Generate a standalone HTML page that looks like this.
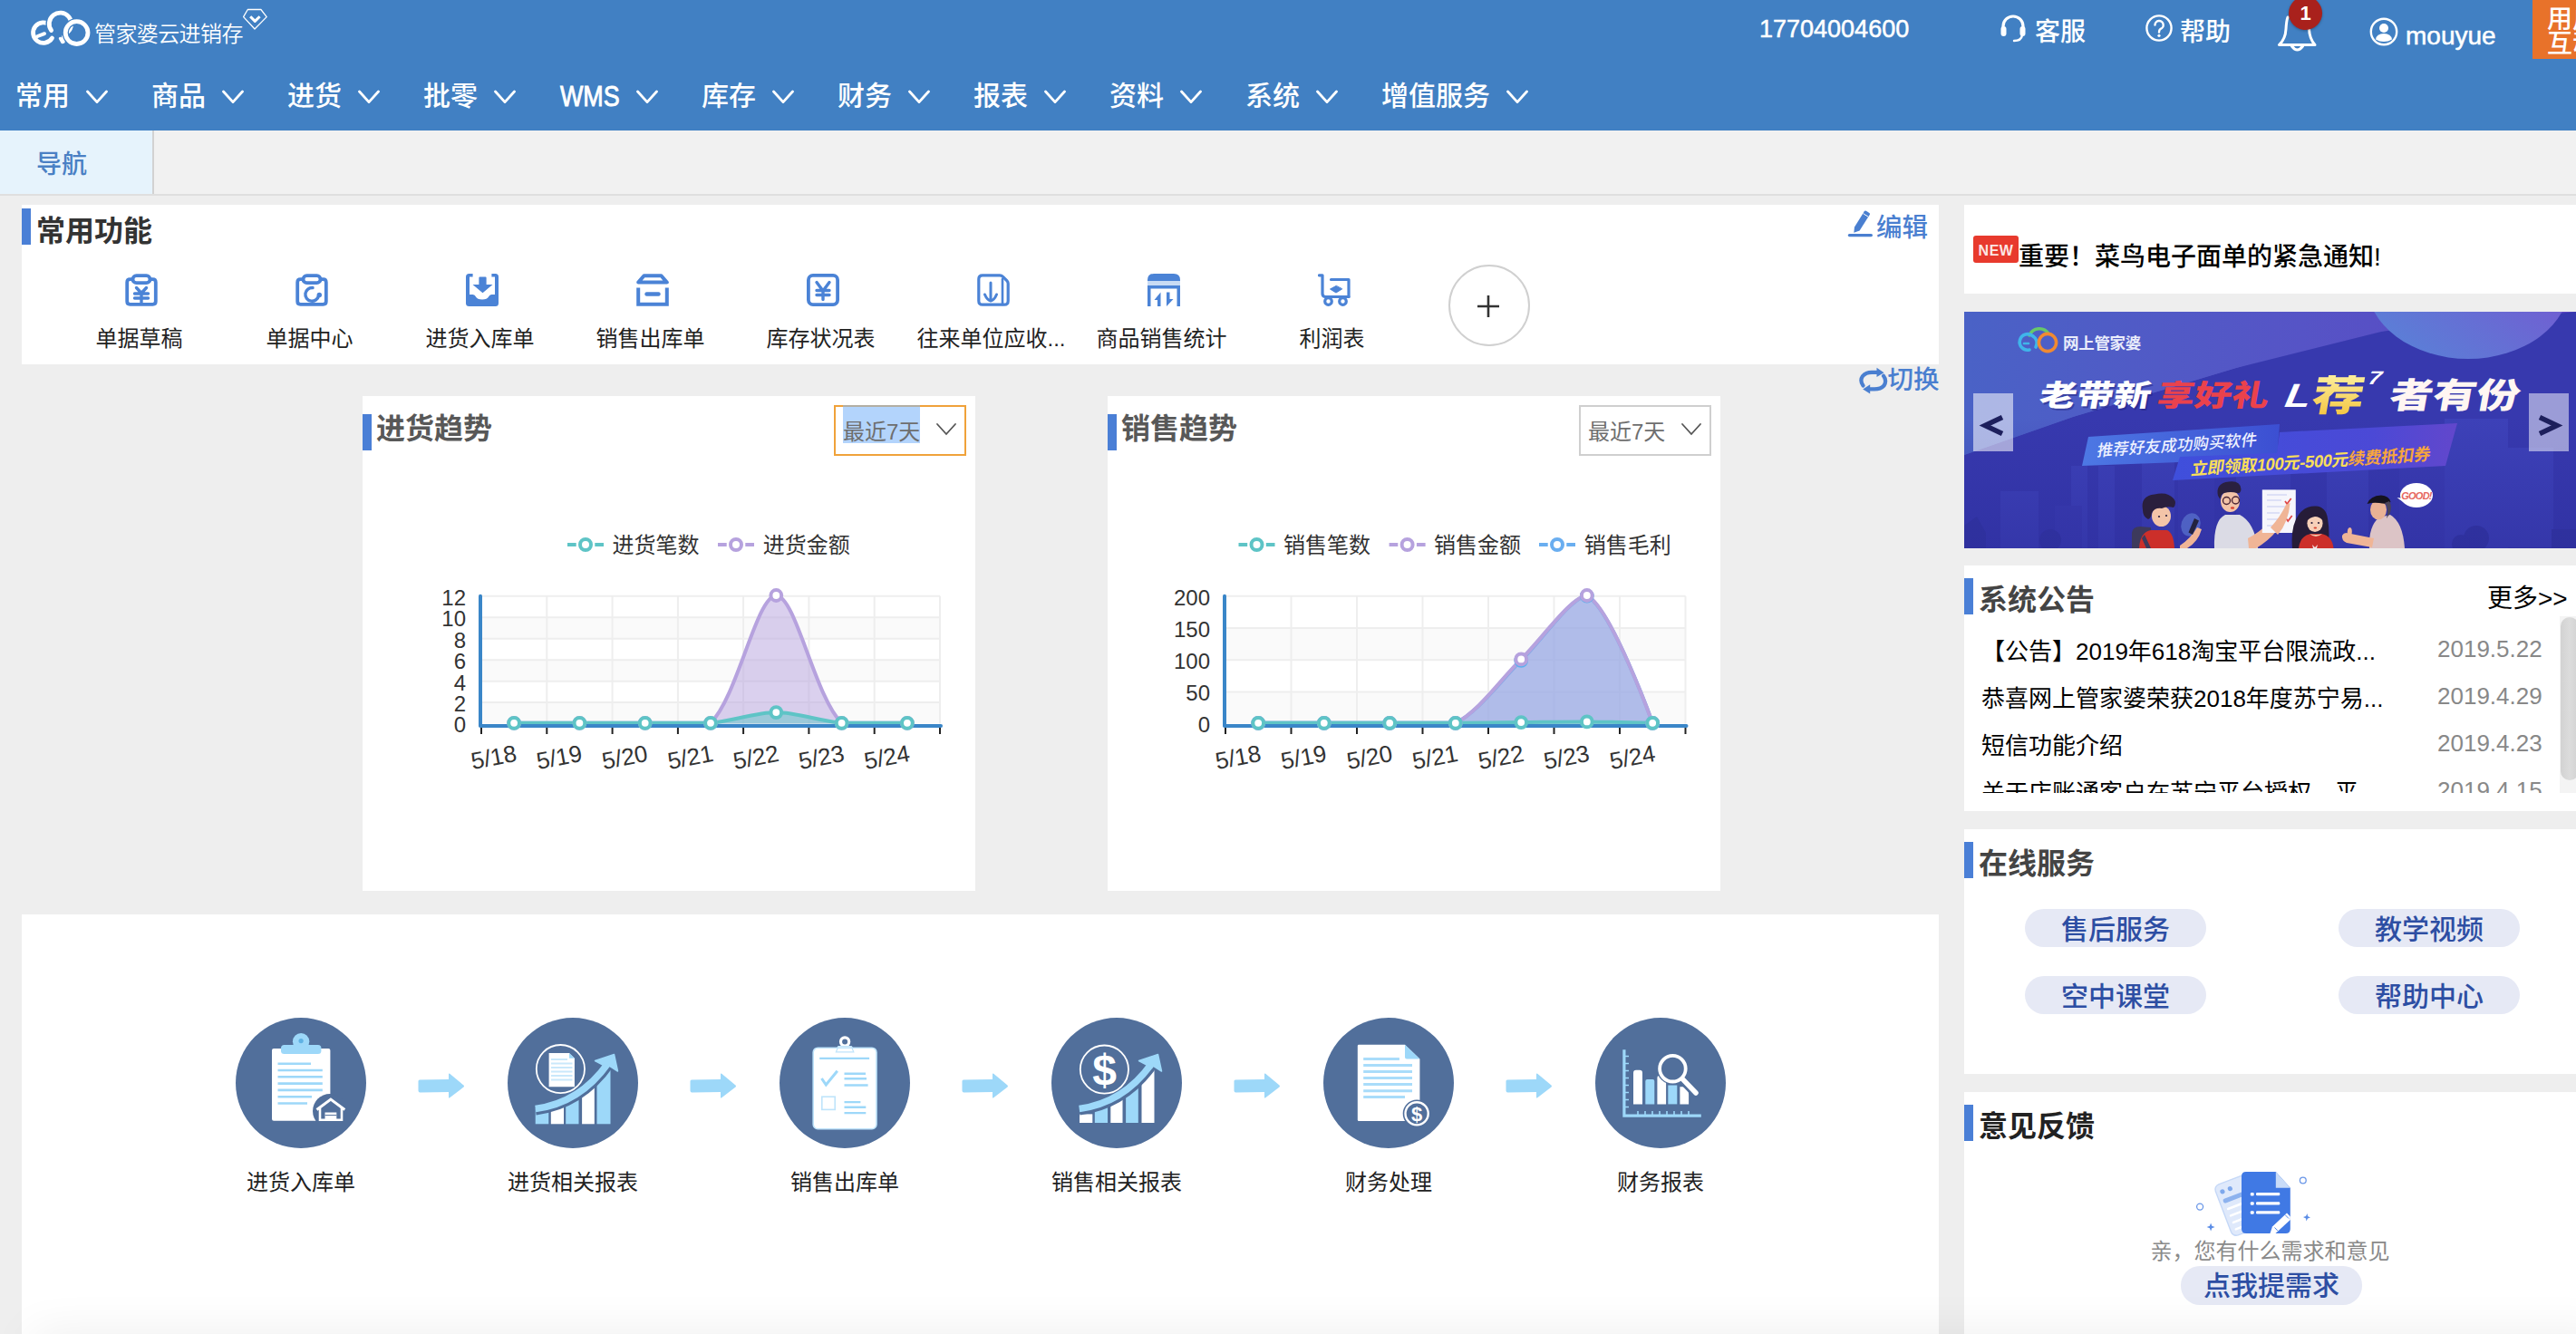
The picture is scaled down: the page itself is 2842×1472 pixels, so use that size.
<!DOCTYPE html>
<html lang="zh-CN">
<head>
<meta charset="utf-8">
<title>管家婆云进销存</title>
<style>
*{box-sizing:border-box;margin:0;padding:0}
html,body{width:2842px;height:1472px;overflow:hidden;background:#eeeeee}
body{font-family:"Liberation Sans","Noto Sans CJK SC",sans-serif;color:#333;position:relative}
.abs{position:absolute}
#hdr{position:absolute;left:0;top:0;width:2842px;height:144px;background:#4180c3}
#logoTxt{position:absolute;left:104px;top:20px;font-size:24px;line-height:36px;color:#fff;font-weight:350;letter-spacing:-0.6px;white-space:nowrap}
.nav{position:absolute;top:84px;height:44px;line-height:44px;font-size:30px;color:#fff;white-space:nowrap;font-weight:500}
.nav svg{position:absolute;top:14.5px;width:24px;height:16px}
.hr{position:absolute;color:#fff;white-space:nowrap;font-size:28px;line-height:40px}
#tabbar{position:absolute;left:0;top:144px;width:2842px;height:72px;background:#f1f1f1;border-bottom:2px solid #dfdfdf}
#tab1{position:absolute;left:0;top:0;width:170px;height:70px;background:#e6f3fc;border-right:2px solid #d2d2d2;color:#4a80c4;font-size:28px;line-height:76px;padding-left:40px;font-weight:500}
.panel{position:absolute;background:#fff}
.bar{position:absolute;width:10px;height:40px;background:#4a7fd6}
.ttl{position:absolute;font-size:32px;font-weight:bold;line-height:40px;color:#333;white-space:nowrap;margin-top:1px}
.fi{position:absolute;width:188px;text-align:center;font-size:24px;line-height:32px;color:#222;white-space:nowrap;top:358px;margin-left:-2.5px}
.fic{position:absolute;top:300px;width:40px;height:40px}
.lnk{position:absolute;font-size:28.5px;line-height:36px;color:#4a7fd0;white-space:nowrap;font-weight:500}
.flow{position:absolute;top:1289px;width:300px;text-align:center;font-size:24px;line-height:32px;color:#222;white-space:nowrap}
.circ{position:absolute;top:1123px;width:144px;height:144px;border-radius:50%;background:#516f9b}
.pill{position:absolute;width:200px;height:42px;border-radius:21px;background:#e6e9f5;color:#2d4ea3;font-size:30px;line-height:45px;text-align:center;white-space:nowrap;font-weight:500;overflow:hidden}
.nt{position:absolute;left:2187px;font-size:26px;line-height:36px;color:#000;white-space:nowrap}
.nd{position:absolute;left:2689px;font-size:26px;line-height:36px;color:#888;white-space:nowrap}
</style>
</head>
<body>
<!-- HEADER -->
<div id="hdr">
  <svg class="abs" style="left:30px;top:8px" width="72" height="48" viewBox="0 0 72 48" fill="none" stroke-linecap="round">
    <path d="M25.5 19.8 A11.3 11.3 0 1 0 27.5 34" stroke="#fff" stroke-width="4.8"/>
    <path d="M11.5 32 L19 29.2" stroke="#fff" stroke-width="4"/>
    <path d="M27.2 26.5 A12.2 12.2 0 1 1 45 27 " stroke="#4180c3" stroke-width="7.4"/>
    <path d="M26.6 25.5 A12.2 12.2 0 1 1 44.5 27.5 Q40 31 39.5 37.5" stroke="#fff" stroke-width="4.8"/>
    <circle cx="54.6" cy="28.1" r="12.4" stroke="#4180c3" stroke-width="7.4"/>
    <circle cx="54.6" cy="28.1" r="12.4" stroke="#fff" stroke-width="4.8"/>
    <path d="M36.5 34.5 L38.8 38.5" stroke="#fff" stroke-width="3.4"/>
  </svg>
  <div id="logoTxt">管家婆云进销存</div>
  <svg class="abs" style="left:268px;top:9px" width="28" height="26" viewBox="0 0 28 26" fill="none" stroke="#fff" stroke-width="1.3" stroke-linejoin="round">
    <path d="M5.3 1.5 L19.9 1.5 L26.2 9.6 L13 23 L0.6 9.6 Z"/>
    <path d="M8.2 9.2 L13.3 14.4 L18.6 9.2" stroke-width="3"/>
  </svg>
  <div class="nav" style="left:17px">常用<svg style="left:78px" viewBox="0 0 24 16" fill="none" stroke="#fff" stroke-width="2.8" stroke-linecap="round" stroke-linejoin="round"><path d="M1.5 2 L12 13.6 L22.5 2"/></svg></div>
<div class="nav" style="left:167px">商品<svg style="left:78px" viewBox="0 0 24 16" fill="none" stroke="#fff" stroke-width="2.8" stroke-linecap="round" stroke-linejoin="round"><path d="M1.5 2 L12 13.6 L22.5 2"/></svg></div>
<div class="nav" style="left:317px">进货<svg style="left:78px" viewBox="0 0 24 16" fill="none" stroke="#fff" stroke-width="2.8" stroke-linecap="round" stroke-linejoin="round"><path d="M1.5 2 L12 13.6 L22.5 2"/></svg></div>
<div class="nav" style="left:467px">批零<svg style="left:78px" viewBox="0 0 24 16" fill="none" stroke="#fff" stroke-width="2.8" stroke-linecap="round" stroke-linejoin="round"><path d="M1.5 2 L12 13.6 L22.5 2"/></svg></div>
<div class="nav" style="left:618px"><span style="display:inline-block;font-size:32px;transform:scaleX(0.84);transform-origin:0 50%;-webkit-text-stroke:0.9px #fff">WMS</span><svg style="left:84px" viewBox="0 0 24 16" fill="none" stroke="#fff" stroke-width="2.8" stroke-linecap="round" stroke-linejoin="round"><path d="M1.5 2 L12 13.6 L22.5 2"/></svg></div>
<div class="nav" style="left:774px">库存<svg style="left:78px" viewBox="0 0 24 16" fill="none" stroke="#fff" stroke-width="2.8" stroke-linecap="round" stroke-linejoin="round"><path d="M1.5 2 L12 13.6 L22.5 2"/></svg></div>
<div class="nav" style="left:924px">财务<svg style="left:78px" viewBox="0 0 24 16" fill="none" stroke="#fff" stroke-width="2.8" stroke-linecap="round" stroke-linejoin="round"><path d="M1.5 2 L12 13.6 L22.5 2"/></svg></div>
<div class="nav" style="left:1074px">报表<svg style="left:78px" viewBox="0 0 24 16" fill="none" stroke="#fff" stroke-width="2.8" stroke-linecap="round" stroke-linejoin="round"><path d="M1.5 2 L12 13.6 L22.5 2"/></svg></div>
<div class="nav" style="left:1224px">资料<svg style="left:78px" viewBox="0 0 24 16" fill="none" stroke="#fff" stroke-width="2.8" stroke-linecap="round" stroke-linejoin="round"><path d="M1.5 2 L12 13.6 L22.5 2"/></svg></div>
<div class="nav" style="left:1374px">系统<svg style="left:78px" viewBox="0 0 24 16" fill="none" stroke="#fff" stroke-width="2.8" stroke-linecap="round" stroke-linejoin="round"><path d="M1.5 2 L12 13.6 L22.5 2"/></svg></div>
<div class="nav" style="left:1524px">增值服务<svg style="left:138px" viewBox="0 0 24 16" fill="none" stroke="#fff" stroke-width="2.8" stroke-linecap="round" stroke-linejoin="round"><path d="M1.5 2 L12 13.6 L22.5 2"/></svg></div>

<div id="hdrR">
  <div class="hr" style="left:1941px;top:12px;font-size:27px;-webkit-text-stroke:0.5px #fff">17704004600</div>
  <!-- headset -->
  <svg class="abs" style="left:2204px;top:14px" width="34" height="34" viewBox="0 0 34 34" fill="none" stroke="#fff" stroke-linecap="round">
    <path d="M6 19 V15 A11 11 0 0 1 28 15 V19" stroke-width="3.2"/>
    <rect x="3.5" y="15" width="6" height="11" rx="3" fill="#fff" stroke="none"/>
    <rect x="24.5" y="15" width="6" height="11" rx="3" fill="#fff" stroke="none"/>
    <path d="M27 25 Q26 31 18 31" stroke-width="2.4"/>
  </svg>
  <div class="hr" style="left:2245px;top:16px;font-weight:500">客服</div>
  <!-- help -->
  <svg class="abs" style="left:2366px;top:15px" width="32" height="32" viewBox="0 0 32 32" fill="none" stroke="#fff">
    <circle cx="16" cy="16" r="13.6" stroke-width="2.4"/>
    <path d="M11.5 12.5 A4.6 4.6 0 1 1 17.5 17 Q16 18 16 20.5" stroke-width="2.4" stroke-linecap="round"/>
    <circle cx="16" cy="24.3" r="1.6" fill="#fff" stroke="none"/>
  </svg>
  <div class="hr" style="left:2405px;top:16px;font-weight:500">帮助</div>
  <!-- bell -->
  <svg class="abs" style="left:2510px;top:14px" width="50" height="46" viewBox="0 0 50 46" fill="none" stroke="#fff" stroke-width="3" stroke-linecap="round" stroke-linejoin="round">
    <path d="M14 5 Q12.5 9 12 18 Q11.5 29 4.5 35.5 L44 35.5 Q38 29 37.5 18"/>
    <path d="M18.5 37 Q24.5 45 30.5 37"/>
  </svg>
  <div class="abs" style="left:2525px;top:-4px;width:37px;height:37px;border-radius:50%;background:#a9211c;color:#fff;font-size:22px;font-weight:bold;line-height:37px;text-align:center;box-shadow:0 1px 3px rgba(0,0,0,.3)">1</div>
  <!-- user -->
  <svg class="abs" style="left:2613px;top:18px" width="34" height="34" viewBox="0 0 34 34" fill="none" stroke="#fff">
    <circle cx="17" cy="17" r="14.2" stroke-width="2.4"/>
    <circle cx="17" cy="13" r="5" fill="#fff" stroke="none"/>
    <path d="M8 25.5 Q9 19 17 19 Q25 19 26 25.5 Q22 28 17 28 Q12 28 8 25.5Z" fill="#fff" stroke="none"/>
  </svg>
  <div class="hr" style="left:2654px;top:20px;font-weight:500;-webkit-text-stroke:0.5px #fff">mouyue</div>
  <div class="abs" style="left:2794px;top:0;width:48px;height:65px;background:#e8722a;overflow:hidden">
    <div style="position:absolute;left:16px;top:8px;width:80px;font-size:28px;line-height:27px;color:#fff;font-weight:500">用户<br>互动</div>
  </div>
</div>
</div>
<!-- TAB BAR -->
<div id="tabbar"><div id="tab1">导航</div></div>
<!-- COMMON FUNCTIONS -->
<div class="panel" style="left:24px;top:226px;width:2115px;height:176px"></div>
<div class="bar" style="left:24px;top:230px"></div>
<div class="ttl" style="left:40px;top:234px">常用功能</div>
<svg class="abs" style="left:2038px;top:230px" width="30" height="34" viewBox="0 0 30 34" fill="#4a7fd0">
  <rect x="0.8" y="28" width="27.2" height="3.2" rx="1.6"/>
  <path d="M7.3 26.8 L8 20.5 L18.8 3.2 Q19.6 2 20.9 2.8 L24.3 4.9 Q25.5 5.7 24.7 7 L13.6 24.6 Z"/>
  <path d="M17.5 5.6 L23.2 9.2" stroke="#fff" stroke-width="1"/>
</svg>
<div class="lnk" style="left:2070px;top:233px">编辑</div>
<svg class="abs" style="left:2050px;top:404px" width="34" height="32" viewBox="0 0 34 32" fill="none" stroke="#4a7fd0" stroke-width="4.2" stroke-linecap="round">
  <path d="M5.5 21.5 Q1.5 16 5 11 Q8.5 6.8 15 6.8 H21"/>
  <path d="M28 10.8 Q32 16 28.5 21.5 Q25 25.4 18 25.4 H12.5"/>
  <path d="M20.5 1.8 L28.5 7.3 L20.5 12 Z" fill="#4a7fd0" stroke="none"/>
  <path d="M13.2 20.3 L5.2 25.6 L13.2 30.6 Z" fill="#4a7fd0" stroke="none"/>
</svg>
<div class="lnk" style="left:2082.5px;top:401px">切换</div>

<!-- func icons -->
<svg class="abs" style="left:138px;top:302px" width="36" height="36" viewBox="0 0 36 36" fill="none" stroke="#4b83d6" stroke-width="3.8" stroke-linejoin="round" stroke-linecap="round">
  <path d="M8 6.2 H5.5 Q2.2 6.2 2.2 9.5 V30.5 Q2.2 33.8 5.5 33.8 H30.5 Q33.8 33.8 33.8 30.5 V9.5 Q33.8 6.2 30.5 6.2 H28"/>
  <rect x="8.5" y="2.2" width="19" height="8" rx="4"/>
  <path d="M12.5 15.5 L18 21.5 L23.5 15.5 M10.5 22 H25.5 M10.5 27 H25.5 M18 21.5 V31.5" stroke-width="3.4"/>
</svg>
<svg class="abs" style="left:326px;top:302px" width="36" height="36" viewBox="0 0 36 36" fill="none" stroke="#4b83d6" stroke-width="3.8" stroke-linejoin="round" stroke-linecap="round">
  <path d="M8 6.2 H5.5 Q2.2 6.2 2.2 9.5 V30.5 Q2.2 33.8 5.5 33.8 H30.5 Q33.8 33.8 33.8 30.5 V9.5 Q33.8 6.2 30.5 6.2 H28"/>
  <rect x="8.5" y="2.2" width="19" height="8" rx="4"/>
  <path d="M19 15.5 A7.4 7.4 0 1 0 25.5 24.5" stroke-width="3.4"/>
  <circle cx="26.3" cy="23.5" r="2.7" fill="#4b83d6" stroke="none"/>
</svg>
<svg class="abs" style="left:514px;top:302px" width="36" height="36" viewBox="0 0 36 36">
  <rect x="0" y="0" width="36" height="36" rx="3.5" fill="#4b83d6"/>
  <path d="M7.6 -1 H28.4 V3.6 H32 V23 H28.4 Q26 23 25 25.5 Q23.5 28.5 18 28.5 Q12.5 28.5 11 25.5 Q10 23 7.6 23 H4 V3.6 H7.6 Z" fill="#fff"/>
  <path d="M14.4 4.5 Q14.4 3.6 15.4 3.6 H21.6 Q22.6 3.6 22.6 4.5 V12 H29.5 L18.5 21.3 L7.5 12 H14.4 Z" fill="#4b83d6"/>
</svg>
<svg class="abs" style="left:702px;top:302px" width="36" height="36" viewBox="0 0 36 36" fill="none" stroke="#4b83d6" stroke-width="4" stroke-linejoin="miter">
  <path d="M8.5 2.2 H27.5 L33.8 9.6 H2.2 Z" stroke-linejoin="round"/>
  <path d="M2.2 15.5 V33.8 H33.8 V15.5"/>
  <path d="M11.5 22.5 H24.5" stroke-linecap="round" stroke-width="4.4"/>
</svg>
<svg class="abs" style="left:890px;top:302px" width="36" height="36" viewBox="0 0 36 36" fill="none" stroke="#4b83d6" stroke-width="3.2" stroke-linecap="round" stroke-linejoin="round">
  <rect x="1.9" y="1.9" width="32.2" height="32.2" rx="5" stroke-width="3.8"/>
  <path d="M11 9.5 L18 19 L25 9.5 M11 18.5 H25 M11 23.5 H25 M18 19 V28.5" stroke-width="3.4"/>
</svg>
<svg class="abs" style="left:1078px;top:302px" width="36" height="36" viewBox="0 0 36 36" fill="none" stroke="#4b83d6" stroke-width="3.2" stroke-linecap="round" stroke-linejoin="round">
  <path d="M6 1.8 H25 Q27 1.8 28.5 3.3 L33 7.8 Q34.2 9 34.2 11 V30 Q34.2 34.2 30 34.2 H6 Q1.8 34.2 1.8 30 V6 Q1.8 1.8 6 1.8 Z"/>
  <path d="M28 6 V34" stroke-width="2.6"/>
  <path d="M15 10 V29 M8.5 23 Q11 29 15 30 Q19 29 21.5 23" stroke-width="3"/>
</svg>
<svg class="abs" style="left:1266px;top:302px" width="36" height="36" viewBox="0 0 36 36" fill="#4b83d6">
  <path d="M0 7 Q0 0 7 0 H29 Q36 0 36 7 V8 H0 Z"/>
  <rect x="0" y="8" width="36" height="5" fill="#c9dbf4"/>
  <path d="M0 13 H36 V36 H32.5 V16.5 H3.5 V36 H0 Z"/>
  <path d="M14.5 20.5 V36 H11 V29 H7.5 Z"/>
  <path d="M21 20.5 H24.5 V28 H28.5 L21 36 Z"/>
</svg>
<svg class="abs" style="left:1454px;top:302px" width="36" height="36" viewBox="0 0 36 36" fill="none" stroke="#4b83d6" stroke-width="3.2" stroke-linecap="round" stroke-linejoin="round">
  <path d="M1.5 1.8 H5 V22 Q5 25.5 8.5 25.5 H34"/>
  <path d="M14.5 6.5 H34 V25.5"/>
  <path d="M20 13.5 L13.5 17 L20 21 L26.5 17 Z" fill="#4b83d6" stroke-width="1"/>
  <circle cx="11.5" cy="30.5" r="3.8"/>
  <circle cx="27.5" cy="30.5" r="3.8"/>
</svg>

<div class="fi" style="left:62px">单据草稿</div>
<div class="fi" style="left:250px">单据中心</div>
<div class="fi" style="left:438px">进货入库单</div>
<div class="fi" style="left:626px">销售出库单</div>
<div class="fi" style="left:814px">库存状况表</div>
<div class="fi" style="left:1002px">往来单位应收...</div>
<div class="fi" style="left:1190px">商品销售统计</div>
<div class="fi" style="left:1378px">利润表</div>
<div class="abs" style="left:1598px;top:292px;width:90px;height:90px;border-radius:50%;border:2px solid #d0d0d0;background:#fff"></div>
<svg class="abs" style="left:1628px;top:324px" width="28" height="28" viewBox="0 0 28 28" stroke="#333" stroke-width="2.6" fill="none"><path d="M14 2 V26 M2 14 H26"/></svg>
<!-- CHARTS -->
<div class="panel" style="left:400px;top:437px;width:676px;height:546px"></div>
<div class="panel" style="left:1222px;top:437px;width:676px;height:546px"></div>
<div class="bar" style="left:400px;top:457px"></div>
<div class="ttl" style="left:415px;top:452px;color:#585858">进货趋势</div>
<div class="abs" style="left:920px;top:447px;width:146px;height:56px;border:2px solid #f0a23a;background:#fff"></div>
<div class="abs" style="left:930px;top:449px;width:85px;height:40px;background:#b3d4fc"></div><div class="abs" style="left:930px;top:447px;width:85px;height:2px;background:#b3afa4"></div>
<div class="abs" style="left:930px;top:461px;font-size:24px;line-height:32px;color:#6e6e6e;white-space:nowrap">最近7天</div>
<svg class="abs" style="left:1032px;top:466px" width="24" height="16" viewBox="0 0 24 16" fill="none" stroke="#555" stroke-width="1.8" stroke-linecap="round"><path d="M2 2 L12 13 L22 2"/></svg>
<svg class="abs" style="left:400px;top:437px" width="676" height="546" viewBox="400 437 676 546" font-family="Liberation Sans, Noto Sans CJK SC, sans-serif">
<path d="M626.0 601 H635.7 M656.3 601 H666.0" stroke="#5ec4c6" stroke-width="4"/>
<circle cx="646.0" cy="601" r="6" fill="#fff" stroke="#5ec4c6" stroke-width="4"/>
<text x="675.6" y="610" font-size="24" fill="#333">进货笔数</text>
<path d="M792.0 601 H801.7 M822.3 601 H832.0" stroke="#b6a2de" stroke-width="4"/>
<circle cx="812.0" cy="601" r="6" fill="#fff" stroke="#b6a2de" stroke-width="4"/>
<text x="841.7" y="610" font-size="24" fill="#333">进货金额</text>
<rect x="531.0" y="681.3" width="506.0" height="23.5" fill="#fafafa"/>
<rect x="531.0" y="728.2" width="506.0" height="23.5" fill="#fafafa"/>
<rect x="531.0" y="775.1" width="506.0" height="23.5" fill="#fafafa"/>
<path d="M531.0 657.8 H1037.0" stroke="#eeeeee" stroke-width="2"/>
<path d="M531.0 681.3 H1037.0" stroke="#eeeeee" stroke-width="2"/>
<path d="M531.0 704.7 H1037.0" stroke="#eeeeee" stroke-width="2"/>
<path d="M531.0 728.2 H1037.0" stroke="#eeeeee" stroke-width="2"/>
<path d="M531.0 751.7 H1037.0" stroke="#eeeeee" stroke-width="2"/>
<path d="M531.0 775.1 H1037.0" stroke="#eeeeee" stroke-width="2"/>
<path d="M603.3 657.8 V798.6" stroke="#eeeeee" stroke-width="2"/>
<path d="M675.6 657.8 V798.6" stroke="#eeeeee" stroke-width="2"/>
<path d="M747.9 657.8 V798.6" stroke="#eeeeee" stroke-width="2"/>
<path d="M820.1 657.8 V798.6" stroke="#eeeeee" stroke-width="2"/>
<path d="M892.4 657.8 V798.6" stroke="#eeeeee" stroke-width="2"/>
<path d="M964.7 657.8 V798.6" stroke="#eeeeee" stroke-width="2"/>
<path d="M1037.0 657.8 V798.6" stroke="#eeeeee" stroke-width="2"/>
<text x="514.0" y="667.6" font-size="24" fill="#333" text-anchor="end">12</text>
<text x="514.0" y="691.1" font-size="24" fill="#333" text-anchor="end">10</text>
<text x="514.0" y="714.5" font-size="24" fill="#333" text-anchor="end">8</text>
<text x="514.0" y="738.0" font-size="24" fill="#333" text-anchor="end">6</text>
<text x="514.0" y="761.5" font-size="24" fill="#333" text-anchor="end">4</text>
<text x="514.0" y="784.9" font-size="24" fill="#333" text-anchor="end">2</text>
<text x="514.0" y="808.4" font-size="24" fill="#333" text-anchor="end">0</text>
<path d="M567.1 797.8 C567.1 797.8 617.7 797.8 639.4 797.8 C661.1 797.8 690.0 797.8 711.7 797.8 C733.4 797.8 770.4 797.8 784.0 797.8 C813.8 768.8 834.6 657.8 856.3 657.0 C878.0 657.8 898.8 768.8 928.6 797.8 C942.2 797.8 1000.9 797.8 1000.9 797.8 L1000.9 798.6 L567.1 798.6 Z" fill="#b6a2de" fill-opacity="0.5"/>
<path d="M567.1 797.8 C567.1 797.8 617.7 797.8 639.4 797.8 C661.1 797.8 690.0 797.8 711.7 797.8 C733.4 797.8 770.4 797.8 784.0 797.8 C813.8 768.8 834.6 657.8 856.3 657.0 C878.0 657.8 898.8 768.8 928.6 797.8 C942.2 797.8 1000.9 797.8 1000.9 797.8" fill="none" stroke="#b6a2de" stroke-width="4" stroke-linejoin="round"/>
<path d="M567.1 797.8 C567.1 797.8 617.7 797.8 639.4 797.8 C661.1 797.8 690.0 797.8 711.7 797.8 C733.4 797.8 762.5 797.8 784.0 797.8 C805.8 796.0 834.6 786.1 856.3 786.1 C878.0 786.1 906.7 796.0 928.6 797.8 C950.1 797.8 1000.9 797.8 1000.9 797.8 L1000.9 798.6 L567.1 798.6 Z" fill="#5ec4c6" fill-opacity="0.5"/>
<path d="M567.1 797.8 C567.1 797.8 617.7 797.8 639.4 797.8 C661.1 797.8 690.0 797.8 711.7 797.8 C733.4 797.8 762.5 797.8 784.0 797.8 C805.8 796.0 834.6 786.1 856.3 786.1 C878.0 786.1 906.7 796.0 928.6 797.8 C950.1 797.8 1000.9 797.8 1000.9 797.8" fill="none" stroke="#5ec4c6" stroke-width="4" stroke-linejoin="round"/>
<path d="M530.0 657.8 V800.6" stroke="#3a86c8" stroke-width="4" stroke-linecap="round"/>
<path d="M530.0 801.0 H1038.0" stroke="#3a86c8" stroke-width="4" stroke-linecap="round"/>
<path d="M531.0 803.0 V810.0" stroke="#222" stroke-width="2"/>
<path d="M603.3 803.0 V810.0" stroke="#222" stroke-width="2"/>
<path d="M675.6 803.0 V810.0" stroke="#222" stroke-width="2"/>
<path d="M747.9 803.0 V810.0" stroke="#222" stroke-width="2"/>
<path d="M820.1 803.0 V810.0" stroke="#222" stroke-width="2"/>
<path d="M892.4 803.0 V810.0" stroke="#222" stroke-width="2"/>
<path d="M964.7 803.0 V810.0" stroke="#222" stroke-width="2"/>
<path d="M1037.0 803.0 V810.0" stroke="#222" stroke-width="2"/>
<circle cx="567.1" cy="797.8" r="5.9" fill="#fff" stroke="#b6a2de" stroke-width="4"/>
<circle cx="639.4" cy="797.8" r="5.9" fill="#fff" stroke="#b6a2de" stroke-width="4"/>
<circle cx="711.7" cy="797.8" r="5.9" fill="#fff" stroke="#b6a2de" stroke-width="4"/>
<circle cx="784.0" cy="797.8" r="5.9" fill="#fff" stroke="#b6a2de" stroke-width="4"/>
<circle cx="856.3" cy="657.0" r="5.9" fill="#fff" stroke="#b6a2de" stroke-width="4"/>
<circle cx="928.6" cy="797.8" r="5.9" fill="#fff" stroke="#b6a2de" stroke-width="4"/>
<circle cx="1000.9" cy="797.8" r="5.9" fill="#fff" stroke="#b6a2de" stroke-width="4"/>
<circle cx="567.1" cy="797.8" r="5.9" fill="#fff" stroke="#5ec4c6" stroke-width="4"/>
<circle cx="639.4" cy="797.8" r="5.9" fill="#fff" stroke="#5ec4c6" stroke-width="4"/>
<circle cx="711.7" cy="797.8" r="5.9" fill="#fff" stroke="#5ec4c6" stroke-width="4"/>
<circle cx="784.0" cy="797.8" r="5.9" fill="#fff" stroke="#5ec4c6" stroke-width="4"/>
<circle cx="856.3" cy="786.1" r="5.9" fill="#fff" stroke="#5ec4c6" stroke-width="4"/>
<circle cx="928.6" cy="797.8" r="5.9" fill="#fff" stroke="#5ec4c6" stroke-width="4"/>
<circle cx="1000.9" cy="797.8" r="5.9" fill="#fff" stroke="#5ec4c6" stroke-width="4"/>
<text transform="translate(567.6,820) rotate(-10.5)" y="20" font-size="26" fill="#333" text-anchor="end">5/18</text>
<text transform="translate(639.9,820) rotate(-10.5)" y="20" font-size="26" fill="#333" text-anchor="end">5/19</text>
<text transform="translate(712.2,820) rotate(-10.5)" y="20" font-size="26" fill="#333" text-anchor="end">5/20</text>
<text transform="translate(784.5,820) rotate(-10.5)" y="20" font-size="26" fill="#333" text-anchor="end">5/21</text>
<text transform="translate(856.8,820) rotate(-10.5)" y="20" font-size="26" fill="#333" text-anchor="end">5/22</text>
<text transform="translate(929.1,820) rotate(-10.5)" y="20" font-size="26" fill="#333" text-anchor="end">5/23</text>
<text transform="translate(1001.4,820) rotate(-10.5)" y="20" font-size="26" fill="#333" text-anchor="end">5/24</text>
</svg>
<div class="bar" style="left:1222px;top:457px"></div>
<div class="ttl" style="left:1237px;top:452px;color:#585858">销售趋势</div>
<div class="abs" style="left:1742px;top:447px;width:146px;height:56px;border:2px solid #cfcfcf;background:#fff"></div>
<div class="abs" style="left:1752px;top:461px;font-size:24px;line-height:32px;color:#6e6e6e;white-space:nowrap">最近7天</div>
<svg class="abs" style="left:1854px;top:466px" width="24" height="16" viewBox="0 0 24 16" fill="none" stroke="#555" stroke-width="1.8" stroke-linecap="round"><path d="M2 2 L12 13 L22 2"/></svg>
<svg class="abs" style="left:1222px;top:437px" width="676" height="546" viewBox="1222 437 676 546" font-family="Liberation Sans, Noto Sans CJK SC, sans-serif">
<path d="M1366.5 601 H1376.2 M1396.8 601 H1406.5" stroke="#5ec4c6" stroke-width="4"/>
<circle cx="1386.5" cy="601" r="6" fill="#fff" stroke="#5ec4c6" stroke-width="4"/>
<text x="1416.0" y="610" font-size="24" fill="#333">销售笔数</text>
<path d="M1532.6 601 H1542.3 M1562.9 601 H1572.6" stroke="#b6a2de" stroke-width="4"/>
<circle cx="1552.6" cy="601" r="6" fill="#fff" stroke="#b6a2de" stroke-width="4"/>
<text x="1582.0" y="610" font-size="24" fill="#333">销售金额</text>
<path d="M1698.0 601 H1707.7 M1728.3 601 H1738.0" stroke="#6aaef0" stroke-width="4"/>
<circle cx="1718.0" cy="601" r="6" fill="#fff" stroke="#6aaef0" stroke-width="4"/>
<text x="1747.8" y="610" font-size="24" fill="#333">销售毛利</text>
<rect x="1352.0" y="693.0" width="507.5" height="35.2" fill="#fafafa"/>
<rect x="1352.0" y="763.4" width="507.5" height="35.2" fill="#fafafa"/>
<path d="M1352.0 657.8 H1859.5" stroke="#eeeeee" stroke-width="2"/>
<path d="M1352.0 693.0 H1859.5" stroke="#eeeeee" stroke-width="2"/>
<path d="M1352.0 728.2 H1859.5" stroke="#eeeeee" stroke-width="2"/>
<path d="M1352.0 763.4 H1859.5" stroke="#eeeeee" stroke-width="2"/>
<path d="M1424.5 657.8 V798.6" stroke="#eeeeee" stroke-width="2"/>
<path d="M1497.0 657.8 V798.6" stroke="#eeeeee" stroke-width="2"/>
<path d="M1569.5 657.8 V798.6" stroke="#eeeeee" stroke-width="2"/>
<path d="M1642.0 657.8 V798.6" stroke="#eeeeee" stroke-width="2"/>
<path d="M1714.5 657.8 V798.6" stroke="#eeeeee" stroke-width="2"/>
<path d="M1787.0 657.8 V798.6" stroke="#eeeeee" stroke-width="2"/>
<path d="M1859.5 657.8 V798.6" stroke="#eeeeee" stroke-width="2"/>
<text x="1335.0" y="667.6" font-size="24" fill="#333" text-anchor="end">200</text>
<text x="1335.0" y="702.8" font-size="24" fill="#333" text-anchor="end">150</text>
<text x="1335.0" y="738.0" font-size="24" fill="#333" text-anchor="end">100</text>
<text x="1335.0" y="773.2" font-size="24" fill="#333" text-anchor="end">50</text>
<text x="1335.0" y="808.4" font-size="24" fill="#333" text-anchor="end">0</text>
<path d="M1388.2 797.8 C1388.2 797.8 1439.0 797.8 1460.8 797.8 C1482.5 797.8 1511.5 797.8 1533.2 797.8 C1555.0 797.8 1587.5 797.8 1605.8 797.8 C1631.0 785.8 1656.7 749.7 1678.2 728.8 C1700.2 707.6 1733.7 657.8 1750.8 657.7 C1777.2 670.3 1823.2 797.8 1823.2 797.8 L1823.2 798.6 L1388.2 798.6 Z" fill="#5ab1ef" fill-opacity="0.5"/>
<path d="M1388.2 797.8 C1388.2 797.8 1439.0 797.8 1460.8 797.8 C1482.5 797.8 1511.5 797.8 1533.2 797.8 C1555.0 797.8 1587.5 797.8 1605.8 797.8 C1631.0 785.8 1656.7 749.7 1678.2 728.8 C1700.2 707.6 1733.7 657.8 1750.8 657.7 C1777.2 670.3 1823.2 797.8 1823.2 797.8" fill="none" stroke="#5ab1ef" stroke-width="4" stroke-linejoin="round"/>
<path d="M1388.2 797.8 C1388.2 797.8 1439.0 797.8 1460.8 797.8 C1482.5 797.8 1511.5 797.8 1533.2 797.8 C1555.0 797.8 1587.6 797.8 1605.8 797.8 C1631.1 785.5 1656.5 748.5 1678.2 727.4 C1700.0 706.3 1733.8 657.8 1750.8 657.0 C1777.3 669.9 1823.2 797.8 1823.2 797.8 L1823.2 798.6 L1388.2 798.6 Z" fill="#b6a2de" fill-opacity="0.5"/>
<path d="M1388.2 797.8 C1388.2 797.8 1439.0 797.8 1460.8 797.8 C1482.5 797.8 1511.5 797.8 1533.2 797.8 C1555.0 797.8 1587.6 797.8 1605.8 797.8 C1631.1 785.5 1656.5 748.5 1678.2 727.4 C1700.0 706.3 1733.8 657.8 1750.8 657.0 C1777.3 669.9 1823.2 797.8 1823.2 797.8" fill="none" stroke="#b6a2de" stroke-width="4" stroke-linejoin="round"/>
<path d="M1388.2 797.8 C1388.2 797.8 1439.0 797.8 1460.8 797.8 C1482.5 797.8 1511.5 797.8 1533.2 797.8 C1555.0 797.8 1584.0 797.8 1605.8 797.8 C1627.5 797.7 1656.5 797.3 1678.2 797.1 C1700.0 796.9 1729.0 796.3 1750.8 796.4 C1772.5 796.5 1823.2 797.8 1823.2 797.8 L1823.2 798.6 L1388.2 798.6 Z" fill="#5ec4c6" fill-opacity="0.5"/>
<path d="M1388.2 797.8 C1388.2 797.8 1439.0 797.8 1460.8 797.8 C1482.5 797.8 1511.5 797.8 1533.2 797.8 C1555.0 797.8 1584.0 797.8 1605.8 797.8 C1627.5 797.7 1656.5 797.3 1678.2 797.1 C1700.0 796.9 1729.0 796.3 1750.8 796.4 C1772.5 796.5 1823.2 797.8 1823.2 797.8" fill="none" stroke="#5ec4c6" stroke-width="4" stroke-linejoin="round"/>
<path d="M1351.0 657.8 V800.6" stroke="#3a86c8" stroke-width="4" stroke-linecap="round"/>
<path d="M1351.0 801.0 H1860.5" stroke="#3a86c8" stroke-width="4" stroke-linecap="round"/>
<path d="M1352.0 803.0 V810.0" stroke="#222" stroke-width="2"/>
<path d="M1424.5 803.0 V810.0" stroke="#222" stroke-width="2"/>
<path d="M1497.0 803.0 V810.0" stroke="#222" stroke-width="2"/>
<path d="M1569.5 803.0 V810.0" stroke="#222" stroke-width="2"/>
<path d="M1642.0 803.0 V810.0" stroke="#222" stroke-width="2"/>
<path d="M1714.5 803.0 V810.0" stroke="#222" stroke-width="2"/>
<path d="M1787.0 803.0 V810.0" stroke="#222" stroke-width="2"/>
<path d="M1859.5 803.0 V810.0" stroke="#222" stroke-width="2"/>
<circle cx="1388.2" cy="797.8" r="5.9" fill="#fff" stroke="#5ab1ef" stroke-width="4"/>
<circle cx="1460.8" cy="797.8" r="5.9" fill="#fff" stroke="#5ab1ef" stroke-width="4"/>
<circle cx="1533.2" cy="797.8" r="5.9" fill="#fff" stroke="#5ab1ef" stroke-width="4"/>
<circle cx="1605.8" cy="797.8" r="5.9" fill="#fff" stroke="#5ab1ef" stroke-width="4"/>
<circle cx="1678.2" cy="728.8" r="5.9" fill="#fff" stroke="#5ab1ef" stroke-width="4"/>
<circle cx="1750.8" cy="657.7" r="5.9" fill="#fff" stroke="#5ab1ef" stroke-width="4"/>
<circle cx="1823.2" cy="797.8" r="5.9" fill="#fff" stroke="#5ab1ef" stroke-width="4"/>
<circle cx="1388.2" cy="797.8" r="5.9" fill="#fff" stroke="#b6a2de" stroke-width="4"/>
<circle cx="1460.8" cy="797.8" r="5.9" fill="#fff" stroke="#b6a2de" stroke-width="4"/>
<circle cx="1533.2" cy="797.8" r="5.9" fill="#fff" stroke="#b6a2de" stroke-width="4"/>
<circle cx="1605.8" cy="797.8" r="5.9" fill="#fff" stroke="#b6a2de" stroke-width="4"/>
<circle cx="1678.2" cy="727.4" r="5.9" fill="#fff" stroke="#b6a2de" stroke-width="4"/>
<circle cx="1750.8" cy="657.0" r="5.9" fill="#fff" stroke="#b6a2de" stroke-width="4"/>
<circle cx="1823.2" cy="797.8" r="5.9" fill="#fff" stroke="#b6a2de" stroke-width="4"/>
<circle cx="1388.2" cy="797.8" r="5.9" fill="#fff" stroke="#5ec4c6" stroke-width="4"/>
<circle cx="1460.8" cy="797.8" r="5.9" fill="#fff" stroke="#5ec4c6" stroke-width="4"/>
<circle cx="1533.2" cy="797.8" r="5.9" fill="#fff" stroke="#5ec4c6" stroke-width="4"/>
<circle cx="1605.8" cy="797.8" r="5.9" fill="#fff" stroke="#5ec4c6" stroke-width="4"/>
<circle cx="1678.2" cy="797.1" r="5.9" fill="#fff" stroke="#5ec4c6" stroke-width="4"/>
<circle cx="1750.8" cy="796.4" r="5.9" fill="#fff" stroke="#5ec4c6" stroke-width="4"/>
<circle cx="1823.2" cy="797.8" r="5.9" fill="#fff" stroke="#5ec4c6" stroke-width="4"/>
<text transform="translate(1388.8,820) rotate(-10.5)" y="20" font-size="26" fill="#333" text-anchor="end">5/18</text>
<text transform="translate(1461.2,820) rotate(-10.5)" y="20" font-size="26" fill="#333" text-anchor="end">5/19</text>
<text transform="translate(1533.8,820) rotate(-10.5)" y="20" font-size="26" fill="#333" text-anchor="end">5/20</text>
<text transform="translate(1606.2,820) rotate(-10.5)" y="20" font-size="26" fill="#333" text-anchor="end">5/21</text>
<text transform="translate(1678.8,820) rotate(-10.5)" y="20" font-size="26" fill="#333" text-anchor="end">5/22</text>
<text transform="translate(1751.2,820) rotate(-10.5)" y="20" font-size="26" fill="#333" text-anchor="end">5/23</text>
<text transform="translate(1823.8,820) rotate(-10.5)" y="20" font-size="26" fill="#333" text-anchor="end">5/24</text>
</svg>
<!-- FLOW -->
<div class="panel" style="left:24px;top:1009px;width:2115px;height:470px"></div>
<svg width="0" height="0" style="position:absolute">
  <defs>
    <g id="farrow"><path d="M2 7.5 Q0.5 7.5 0.5 9 V19.5 Q0.5 21.5 2.5 21.5 L34 21 V27 Q34 28 35.2 27.3 L50.5 15.5 Q51.5 14.5 50.5 13.6 L35.2 0.8 Q34 0 34 1.2 V7 Z" fill="#9dd8f9"/></g>
    <g id="swbg"><path d="M30.7 100.5 Q80 94 111 50" fill="none" stroke="#516f9b" stroke-width="14"/></g>
    <g id="swoosh">
      <path d="M30.7 100.5 Q80 94 111 50" fill="none" stroke="#9dd8f9" stroke-width="7.5"/>
      <path d="M96.5 47.5 L117.5 40.5 L121.5 59 L113 53.5 L106 52.5 Z" fill="#9dd8f9" stroke="#9dd8f9" stroke-width="1.5" stroke-linejoin="round"/>
    </g>
  </defs>
</svg>
<!-- 1 -->
<svg class="abs" style="left:260px;top:1123px" width="144" height="144" viewBox="0 0 144 144">
  <circle cx="72" cy="72" r="72" fill="#516f9b"/>
  <rect x="40" y="34" width="64.4" height="79.7" rx="2" fill="#fff"/>
  <circle cx="72.1" cy="26.2" r="9.2" fill="#9dd8f9"/>
  <circle cx="72.1" cy="25.6" r="2.6" fill="#5fb2e4"/>
  <rect x="50" y="30" width="44.4" height="10" rx="3.5" fill="#9dd8f9"/>
  <g stroke="#9dd8f9" stroke-width="2.6">
    <path d="M46.5 50.7 H83 M46.5 58 H95.8 M46.5 65.3 H95.8 M46.5 72.6 H95.8 M46.5 79.9 H95.8 M46.5 87.2 H84 M46.5 94.5 H79"/>
  </g>
  <circle cx="104" cy="103" r="19" fill="#516f9b"/>
  <path d="M89.5 101.5 L104.9 90 L120.3 101.5" fill="none" stroke="#fff" stroke-width="3" stroke-linejoin="miter"/>
  <path d="M93 100 V112.8 H117 V100" fill="none" stroke="#fff" stroke-width="2.6"/>
  <path d="M98.5 104.5 H111.3 V112.8 H98.5 Z" fill="#fff"/>
  <path d="M98.5 107.6 H111.3" stroke="#516f9b" stroke-width="1"/>
</svg>
<!-- 2 -->
<svg class="abs" style="left:560px;top:1123px" width="144" height="144" viewBox="0 0 144 144">
  <circle cx="72" cy="72" r="72" fill="#516f9b"/>
  <rect x="30.7" y="100" width="14.6" height="17.3" fill="#9dd8f9"/>
  <rect x="47.8" y="95" width="14.2" height="22.3" fill="#fff"/>
  <rect x="64.2" y="88" width="14.3" height="29.3" fill="#9dd8f9"/>
  <rect x="82.1" y="76" width="13.7" height="41.3" fill="#fff"/>
  <rect x="98.5" y="58" width="15" height="59.3" fill="#9dd8f9"/>
  <use href="#swbg"/>
  <circle cx="58.4" cy="56.6" r="26.6" fill="none" stroke="#fff" stroke-width="1.8"/>
  <path d="M45.6 38.9 H68 L73.9 44.8 V76.3 H45.6 Z" fill="#fff"/>
  <path d="M68 38.9 L73.9 44.8 H68 Z" fill="#9dd8f9"/>
  <g stroke="#c9e8fb" stroke-width="2.2"><path d="M48 46 H66 M48 50.5 H71.5 M48 55 H71.5 M48 59.5 H71.5 M48 64 H71.5 M48 68.5 H71.5"/></g>
  <use href="#swoosh"/>
</svg>
<!-- 3 -->
<svg class="abs" style="left:860px;top:1123px" width="144" height="144" viewBox="0 0 144 144">
  <circle cx="72" cy="72" r="72" fill="#516f9b"/>
  <circle cx="72.1" cy="26.5" r="4.6" fill="none" stroke="#fff" stroke-width="3.2"/>
  <path d="M64.5 31.5 H79.7 L81.8 37.5 H62.4 Z" fill="#fff" stroke="#bfe4fb" stroke-width="1"/>
  <rect x="37.2" y="33.2" width="69.8" height="89.5" rx="5" fill="#fff" stroke="#bfe4fb" stroke-width="1.6"/>
  <path d="M62.4 37.8 L64.2 33.4 H80 L81.8 37.8 Z" fill="#fff" stroke="#bfe4fb" stroke-width="1.2"/>
  <g stroke="#9dd8f9" fill="none">
    <path d="M44.2 44.9 H99.1" stroke-width="2.2"/>
    <path d="M46.5 67 L51.3 74 L63.8 58.8" stroke-width="3"/>
    <path d="M71.5 61.7 H95 M71.5 67.2 H96 M71.5 74.5 H97.6" stroke-width="2.4"/>
    <rect x="46.8" y="87.2" width="14.4" height="14.2" stroke-width="1.6" stroke="#bfe4fb"/>
    <path d="M71.5 93.1 H89.4 M71.5 98.7 H95.3 M71.5 105.1 H95.3" stroke-width="2.4"/>
  </g>
</svg>
<!-- 4 -->
<svg class="abs" style="left:1160px;top:1123px" width="144" height="144" viewBox="0 0 144 144">
  <circle cx="72" cy="72" r="72" fill="#516f9b"/>
  <rect x="31" y="106.4" width="14.3" height="9.6" fill="#fff"/>
  <rect x="47.8" y="95" width="14.2" height="21" fill="#9dd8f9"/>
  <rect x="65.3" y="88" width="13.2" height="28" fill="#fff"/>
  <rect x="82.1" y="76" width="13.7" height="40" fill="#9dd8f9"/>
  <rect x="99.5" y="58" width="14" height="58" fill="#fff"/>
  <use href="#swbg"/>
  <circle cx="58.4" cy="57.1" r="26.6" fill="none" stroke="#fff" stroke-width="1.8"/>
  <text x="58.6" y="74" font-family="Liberation Sans, sans-serif" font-weight="bold" font-size="48" fill="#fff" text-anchor="middle">$</text>
  <use href="#swoosh"/>
</svg>
<!-- 5 -->
<svg class="abs" style="left:1460px;top:1123px" width="144" height="144" viewBox="0 0 144 144">
  <circle cx="72" cy="72" r="72" fill="#516f9b"/>
  <path d="M39 29.7 H90 L106.4 45.6 V114 H39 Q37.8 114 37.8 112.8 V31 Q37.8 29.7 39 29.7 Z" fill="#fff"/>
  <path d="M90 29.7 L106.4 45.6 H92 Q90 45.6 90 43.6 Z" fill="#9dd8f9"/>
  <g stroke="#a9dcfa" stroke-width="3"><path d="M44.2 45.6 H83.9 M44.2 52.6 H98 M44.2 59.5 H98 M44.2 66.6 H98 M44.2 73.5 H98 M44.2 80.8 H98 M44.2 87.6 H90"/></g>
  <circle cx="103.1" cy="105.8" r="15.4" fill="#516f9b"/>
  <circle cx="103.1" cy="105.8" r="12.6" fill="#516f9b" stroke="#fff" stroke-width="2.4"/>
  <text x="103.2" y="113.8" font-family="Liberation Sans, sans-serif" font-weight="bold" font-size="22" fill="#fff" text-anchor="middle">$</text>
</svg>
<!-- 6 -->
<svg class="abs" style="left:1760px;top:1123px" width="144" height="144" viewBox="0 0 144 144">
  <circle cx="72" cy="72" r="72" fill="#516f9b"/>
  <path d="M31.9 35.2 V108.2 H116.8" fill="none" stroke="#9dd8f9" stroke-width="3.2"/>
  <g stroke="#9dd8f9" stroke-width="1.6"><path d="M32 42.5 H37 M32 50.5 H37 M32 58.5 H37 M32 66.5 H37 M32 74.5 H37 M32 82.5 H37 M32 90.5 H37 M32 98.5 H37"/><path d="M47 108 V103 M55 108 V103 M63 108 V103 M71 108 V103 M79 108 V103 M87 108 V103 M95 108 V103 M103 108 V103"/></g>
  <path d="M42 95.4 V60.7 Q42 57.7 45 57.7 H49 Q52 57.7 52 60.7 V95.4 Z" fill="#fff"/>
  <path d="M55.3 95.4 V70 Q55.3 68 57.3 68 H63.3 Q65.3 68 65.3 70 V95.4 Z" fill="#9dd8f9"/>
  <path d="M68.4 95.4 V66 Q68.4 64 70.4 64 H76.1 Q78.1 64 78.1 66 V95.4 Z" fill="#fff"/>
  <path d="M80.3 95.4 V74.5 H90.3 V95.4 Z" fill="#9dd8f9"/>
  <path d="M93.4 95.4 V76.3 H97 Q103.1 78 103.1 85 V95.4 Z" fill="#fff"/>
  <path d="M97.6 69 L111 83" stroke="#516f9b" stroke-width="11" stroke-linecap="round"/>
  <circle cx="85.4" cy="56.2" r="17.5" fill="#516f9b"/>
  <circle cx="85.4" cy="56.2" r="14.3" fill="#516f9b" stroke="#fff" stroke-width="3.8"/>
  <path d="M96.5 67.8 L111 83" stroke="#fff" stroke-width="5.5" stroke-linecap="round"/>
</svg>
<svg class="abs" style="left:461px;top:1184px" width="52" height="28"><use href="#farrow"/></svg>
<svg class="abs" style="left:761px;top:1184px" width="52" height="28"><use href="#farrow"/></svg>
<svg class="abs" style="left:1061px;top:1184px" width="52" height="28"><use href="#farrow"/></svg>
<svg class="abs" style="left:1361px;top:1184px" width="52" height="28"><use href="#farrow"/></svg>
<svg class="abs" style="left:1661px;top:1184px" width="52" height="28"><use href="#farrow"/></svg>
<div class="flow" style="left:182px">进货入库单</div>
<div class="flow" style="left:482px">进货相关报表</div>
<div class="flow" style="left:782px">销售出库单</div>
<div class="flow" style="left:1082px">销售相关报表</div>
<div class="flow" style="left:1382px">财务处理</div>
<div class="flow" style="left:1682px">财务报表</div>
<!-- BANNER -->
<svg class="abs" style="left:2167px;top:344px" width="675" height="261" viewBox="0 0 675 261" font-family="Liberation Sans, Noto Sans CJK SC, sans-serif">
  <defs>
    <linearGradient id="bgA" x1="0" y1="0" x2="1" y2="0"><stop offset="0" stop-color="#4a62c6"/><stop offset="0.55" stop-color="#5654c6"/><stop offset="1" stop-color="#5a45c2"/></linearGradient>
    <linearGradient id="bgC" x1="0" y1="1" x2="1" y2="0"><stop offset="0" stop-color="#5686d8"/><stop offset="0.6" stop-color="#6e62d2"/><stop offset="1" stop-color="#7a50cc"/></linearGradient>
    <linearGradient id="rb1" x1="0" y1="0" x2="1" y2="0"><stop offset="0" stop-color="#4d78e4"/><stop offset="1" stop-color="#3c4fd2"/></linearGradient>
    <linearGradient id="rb2" x1="0" y1="0" x2="1" y2="0"><stop offset="0" stop-color="#3f4fdc"/><stop offset="0.7" stop-color="#4b49d6"/><stop offset="1" stop-color="#6247cc"/></linearGradient>
    <linearGradient id="gold" x1="0" y1="0" x2="0" y2="1"><stop offset="0" stop-color="#fdf0a0"/><stop offset="1" stop-color="#f3c23c"/></linearGradient>
    <linearGradient id="dk" x1="0" y1="0" x2="0" y2="1"><stop offset="0.45" stop-color="#2a2a98" stop-opacity="0"/><stop offset="1" stop-color="#2a2a98" stop-opacity="0.45"/></linearGradient>
    <clipPath id="bclip"><rect x="0" y="0" width="675" height="261"/></clipPath>
  </defs>
  <g clip-path="url(#bclip)">
    <rect width="675" height="261" fill="#3739ae"/>
    <path d="M0 0 H675 V-10 L460 22 L300 62 L120 116 L0 158 Z" fill="url(#bgA)"/>
    <path d="M0 0 H675 V0 L430 24 L300 62 L120 116 L0 158 Z" fill="url(#bgA)"/>
    <ellipse cx="556" cy="-32" rx="112" ry="84" fill="url(#bgC)"/>
    <!-- city -->
    <g fill="#3d41b8">
      <rect x="40" y="198" width="42" height="70"/><rect x="118" y="170" width="18" height="95"/><rect x="148" y="170" width="18" height="95"/>
      <rect x="196" y="160" width="36" height="100"/><rect x="300" y="150" width="60" height="110"/><rect x="400" y="175" width="46" height="90"/>
      <rect x="530" y="118" width="70" height="150"/><rect x="600" y="150" width="50" height="110"/>
    </g>
    <g fill="#3a3cb2"><rect x="100" y="214" width="30" height="50"/><rect x="236" y="178" width="40" height="85"/><rect x="480" y="160" width="50" height="105"/></g>
    <g fill="#3235a2"><path d="M0 236 L14 226 L24 244 V261 H0 Z"/><circle cx="95" cy="252" r="12"/><circle cx="565" cy="250" r="14"/><circle cx="548" cy="256" r="10"/><rect x="648" y="240" width="27" height="21"/></g>
    <rect width="675" height="261" fill="url(#dk)"/>
    <!-- logo -->
    <g fill="none" stroke-width="3.6" stroke-linecap="round">
      <path d="M72 26 A12 12 0 0 1 93 24" stroke="#67c86a"/>
      <path d="M72 42 A8.8 8.8 0 1 1 76 27" stroke="#3fb5ea"/>
      <path d="M76 27 A8.8 8.8 0 0 1 79 39" stroke="#3fb5ea"/>
      <circle cx="92" cy="34" r="9.6" stroke="#f08a32"/>
      <path d="M66 35 h5" stroke="#3fb5ea" stroke-width="2.6"/>
    </g>
    <text x="109" y="41" font-size="17.5" font-weight="bold" fill="#e9ecfb" letter-spacing="-0.3">网上管家婆</text>
    <!-- headline -->
    <g font-weight="900" transform="skewX(-10) scale(1,0.8)">
      <text x="102" y="133" font-size="41" fill="#1f1f7a" opacity="0.45">老带新</text>
      <text x="100" y="130.5" font-size="41" fill="#fff">老带新</text>
      <text x="230" y="130.5" font-size="41" fill="#ea424c">享好礼</text>
      <text x="371" y="131" font-size="46" fill="#fff" font-style="italic">L</text>
      <text x="401" y="136" font-size="57" fill="url(#gold)">荐</text>
      <text x="459" y="100" font-size="26" fill="#fff" font-style="italic">7</text>
      <text x="486" y="132" font-size="48" fill="#fff6f2">者有份</text>
    </g>
    <!-- ribbons -->
    <path d="M137 138 L348 124 L345 162 L130 170 Z" fill="url(#rb1)"/>
    <path d="M348 133 L544 123 L531 170 L230 186 L238 160 L345 156 Z" fill="url(#rb2)"/>
    <g transform="rotate(-4 240 150) skewX(-12)" font-weight="500">
      <text x="178" y="153" font-size="17.5" fill="#eef1ff" letter-spacing="0.2">推荐好友成功购买软件</text>
    </g>
    <g transform="rotate(-3.6 380 170) skewX(-12)" font-weight="bold">
      <text x="286" y="172" font-size="18.5" fill="#f8de5a" letter-spacing="-0.4">立即领取100元-500元<tspan fill="#f6a53e">续费抵扣券</tspan></text>
    </g>
    <!-- people -->
    <!-- p1 boy -->
    <path d="M185 261 V244 Q186 237 194 237 L206 238 L208 261 Z" fill="#3d3a5c"/>
    <path d="M193 261 Q194 243 206 241 L224 241 Q231 244 232 261 Z" fill="#cc2f2a"/>
    <path d="M199 246 L206 261 H201 L196 250 Z" fill="#3d3a5c"/>
    <ellipse cx="250" cy="235" rx="10.5" ry="13" fill="#5468c8" opacity="0.85" transform="rotate(18 250 235)"/>
    <path d="M238 258 Q250 250 257 238 L262 240 Q258 254 246 261 H238 Z" fill="#f0b596"/>
    <path d="M254 228 L259 230.5 L252 246 L247.5 243.5 Z" fill="#23233f"/>
    <ellipse cx="217.5" cy="225.5" rx="10.5" ry="11.5" fill="#f3c4a8"/>
    <path d="M197 219 Q194 203 210 201.5 Q224 198 231 206 Q235 211 231 216 Q224 214 218 217 Q210 216 207 222 Q206 228 203 229 Q197 226 197 219 Z" fill="#2a1f3d"/>
    <circle cx="215" cy="226" r="1.1" fill="#2a1f3d"/><circle cx="223" cy="225" r="1.1" fill="#2a1f3d"/>
    <!-- p2 man glasses -->
    <path d="M276 261 Q275 230 288 224 L304 224 Q320 232 324 261 Z" fill="#dbdbe5"/>
    <path d="M313 250 Q336 238 352 213 L359 211 L357 218 Q350 244 322 261 H314 Z" fill="#f0b596"/>
    <ellipse cx="293.5" cy="209" rx="10.5" ry="12" fill="#f3c4a8"/>
    <path d="M280 203 Q277 189 292 187.5 Q305 186 305.5 196 Q305 201 301 200 Q294 198 287 200 Q283 201 282.5 207 Z" fill="#2a2040"/>
    <circle cx="289.5" cy="208.5" r="4" fill="none" stroke="#4a2434" stroke-width="1.4"/><circle cx="299.5" cy="208" r="4" fill="none" stroke="#4a2434" stroke-width="1.4"/>
    <ellipse cx="296" cy="216.5" rx="2.2" ry="1.2" fill="#d8442f"/>
    <!-- paper -->
    <rect x="328.8" y="196.4" width="37" height="47.6" fill="#f6f6fc"/>
    <g stroke="#c3c9f0" stroke-width="1.1"><path d="M334 202 H356 M334 208 H350 M334 215 H354 M334 222 H348 M334 229 H356 M334 236 H350"/></g>
    <g stroke="#e04646" stroke-width="1.7" fill="none"><path d="M354 209 l2.2 3 l4.5 -6 M355 228 l2.2 3 l4.5 -6"/></g>
    <path d="M338 238 Q349 226 355 213 L359.5 211 Q358 232 346 246 Z" fill="#f0b596"/>
    <!-- p3 girl -->
    <path d="M362 261 Q360 236 369 224 Q376 214 388 214.5 Q399 215 401 228 Q404 246 401 261 Z" fill="#261c38"/>
    <path d="M369 261 Q371 246 384 245 L394 245 Q406 247 407.5 261 Z" fill="#cc2f2a"/>
    <path d="M381 245 Q388 251 395 245 Q388 247 381 245 Z" fill="#f3c4a8"/>
    <ellipse cx="387" cy="233.5" rx="8.6" ry="9.4" fill="#f7d0b8"/>
    <path d="M378 231 Q379 222 388 222 Q396 222 396.5 231 Q392 226 387 226 Q381 227 378 231 Z" fill="#261c38"/>
    <circle cx="383.5" cy="233" r="1.1" fill="#261c38"/><circle cx="391" cy="233" r="1.1" fill="#261c38"/>
    <ellipse cx="387.3" cy="238.6" rx="1.8" ry="1" fill="#d8442f"/>
    <path d="M384 257 l3 3 l3 -3 l-1 4 h-4 Z" fill="#f3e6e6"/>
    <!-- p4 man -->
    <path d="M447 261 Q446 236 458 227 L470 224 Q484 232 486 261 Z" fill="#dcc4c6"/>
    <path d="M417 247 Q419 243 424 244.5 L452 250 L450 260 L422 255 Q416 252 417 247 Z" fill="#f0b596"/>
    <path d="M423 246 Q422 238 426 238 Q428.5 239 427.5 246 Z" fill="#f0b596"/>
    <ellipse cx="457" cy="218.5" rx="9" ry="10.8" fill="#e9b294"/>
    <path d="M444.5 212 Q448 203 460 202.5 Q469 203 470.5 210 Q466 213 458 211 Q451 210 444.5 212 Z" fill="#15131f"/>
    <path d="M464 211 Q469 216 466 228 L470 222 Q472 214 469 209 Z" fill="#4a4458"/>
    <!-- bubble -->
    <ellipse cx="499" cy="202.5" rx="18" ry="13.4" fill="#fff"/>
    <path d="M484 206 L477.5 205 L487 212 Z" fill="#fff"/>
    <text x="499" y="207" font-size="11" font-style="italic" font-weight="bold" fill="#e4574f" text-anchor="middle" letter-spacing="-0.8" opacity="0.9">GOOD!</text>
  </g>
</svg>
<div class="abs" style="left:2177px;top:434px;width:44px;height:64px;background:rgba(255,255,255,0.55)"></div>
<div class="abs" style="left:2790px;top:434px;width:44px;height:64px;background:rgba(255,255,255,0.5)"></div>
<svg class="abs" style="left:2177px;top:434px" width="44" height="64" viewBox="0 0 44 64" fill="none" stroke="#1d1f5c" stroke-width="5.5"><path d="M32 26.5 L13 35.5 L32 44.5"/></svg>
<svg class="abs" style="left:2790px;top:434px" width="44" height="64" viewBox="0 0 44 64" fill="none" stroke="#1d1f5c" stroke-width="5.5"><path d="M12 26.5 L31 35.5 L12 44.5"/></svg>
<!-- RIGHT COLUMN -->
<div class="panel" style="left:2167px;top:226px;width:680px;height:98px"></div>
<div class="abs" style="left:2177px;top:260px;width:50px;height:30px;background:#e83a2d;border-radius:3px;color:#fff;font-size:16px;font-weight:bold;line-height:34px;text-align:center;letter-spacing:0.5px;color:rgba(255,255,255,.88)">NEW</div>
<div class="abs" style="left:2227px;top:264px;font-size:28px;line-height:40px;color:#000;white-space:nowrap;font-weight:500">重要！菜鸟电子面单的紧急通知!</div>

<!-- system announcements -->
<div class="panel" style="left:2167px;top:624px;width:680px;height:271px"></div>
<div class="bar" style="left:2167px;top:638px"></div>
<div class="ttl" style="left:2183px;top:641px;color:#444">系统公告</div>
<div class="abs" style="left:2744px;top:642px;font-size:28px;line-height:38px;color:#000;white-space:nowrap">更多&gt;&gt;</div>
<div class="abs" style="left:2167px;top:680px;width:675px;height:195px;overflow:hidden">
  <div class="nt" style="left:19px;top:21px">【公告】2019年618淘宝平台限流政...</div><div class="nd" style="left:522px;top:18px">2019.5.22</div>
  <div class="nt" style="left:19px;top:73px">恭喜网上管家婆荣获2018年度苏宁易...</div><div class="nd" style="left:522px;top:70px">2019.4.29</div>
  <div class="nt" style="left:19px;top:125px">短信功能介绍</div><div class="nd" style="left:522px;top:122px">2019.4.23</div>
  <div class="nt" style="left:19px;top:177px">关于店账通客户在苏宁平台授权、平...</div><div class="nd" style="left:522px;top:174px">2019.4.15</div>
  <div class="abs" style="left:657px;top:0;width:18px;height:195px;background:#f4f4f4"></div>
  <div class="abs" style="left:658px;top:1px;width:20px;height:180px;border-radius:10px;background:linear-gradient(90deg,#d2d2d2,#dcdcdc 50%,#d2d2d2)"></div>
</div>

<!-- online service -->
<div class="panel" style="left:2167px;top:915px;width:680px;height:270px"></div>
<div class="bar" style="left:2167px;top:929px"></div>
<div class="ttl" style="left:2183px;top:932px;color:#444">在线服务</div>
<div class="pill" style="left:2234px;top:1003px">售后服务</div>
<div class="pill" style="left:2580px;top:1003px">教学视频</div>
<div class="pill" style="left:2234px;top:1077px">空中课堂</div>
<div class="pill" style="left:2580px;top:1077px">帮助中心</div>

<!-- feedback -->
<div class="panel" style="left:2167px;top:1205px;width:680px;height:280px"></div>
<div class="bar" style="left:2167px;top:1219px"></div>
<div class="ttl" style="left:2183px;top:1222px;color:#222">意见反馈</div>
<div class="abs" style="left:2167px;top:1365px;width:675px;text-align:center;font-size:24px;line-height:32px;color:#8a8a8a;white-space:nowrap">亲，您有什么需求和意见</div>
<div class="pill" style="left:2406px;top:1397px;height:43px;line-height:43px">点我提需求</div>
<svg class="abs" style="left:2400px;top:1280px" width="180" height="92" viewBox="0 0 180 92">
  <g transform="translate(6,2) rotate(-21 60 50)">
    <rect x="46" y="20" width="38" height="60" rx="6" fill="#dfe9fb" stroke="#c5d8f7" stroke-width="1.4"/>
    <circle cx="53" cy="29" r="2.6" fill="#7ea8ec"/><circle cx="62" cy="29" r="2.6" fill="#7ea8ec"/>
    <rect x="50" y="37" width="30" height="5" rx="2" fill="#8db2ee"/>
    <g stroke="#fff" stroke-width="2.6" stroke-linecap="round"><path d="M52 49 H76 M52 57 H76 M52 65 H76 M52 73 H70"/></g>
  </g>
  <path d="M78 12.9 H110.8 L126.8 30.7 V76 Q126.8 81 121.8 81 H78 Q73 81 73 76 V17.9 Q73 12.9 78 12.9 Z" fill="#4079e4"/>
  <path d="M110.8 12.9 L126.8 30.7 H110.8 Z" fill="#c9dcf8"/>
  <g fill="#fff"><rect x="82.8" y="36" width="3.9" height="3.6" rx="1"/><rect x="89" y="36.1" width="26.3" height="3.2" rx="1.2"/>
  <rect x="82.8" y="46.2" width="3.9" height="3.6" rx="1"/><rect x="89" y="46.3" width="26.3" height="3.2" rx="1.2"/>
  <rect x="82.8" y="56.2" width="3.9" height="3.6" rx="1"/><rect x="89" y="56.3" width="26.3" height="3.2" rx="1.2"/></g>
  <path d="M104.5 81 L107 73.5 L123 58.5 L126.8 62.5 V66 L110.5 81 Z" fill="#fff"/>
  <path d="M109.5 74.5 L112.8 78" stroke="#4079e4" stroke-width="0.9"/>
  <path d="M121 60.5 L125 64.5" stroke="#4079e4" stroke-width="0.9"/>
  <circle cx="140.8" cy="22.5" r="3.4" fill="none" stroke="#6a97e8" stroke-width="1.3"/>
  <circle cx="27.1" cy="51.6" r="3.5" fill="none" stroke="#6a97e8" stroke-width="1.3"/>
  <path d="M39.1 69.5 L40.3 72.8 L43.6 74 L40.3 75.2 L39.1 78.5 L37.9 75.2 L34.6 74 L37.9 72.8 Z" fill="#5b8de6"/>
  <path d="M145.5 59 L146 62 L149 63.5 L146 64.5 L144.5 67.5 L144 64.5 L141 63 L144 62 Z" fill="#5b8de6"/>
</svg>
<!-- bottom soft shadow -->
<div class="abs" style="left:50px;top:1488px;width:2820px;height:10px;box-shadow:0 0 52px 14px rgba(0,0,0,0.085)"></div>
</body>
</html>
